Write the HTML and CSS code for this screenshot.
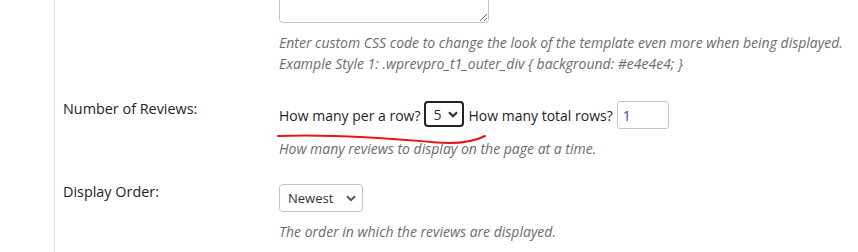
FILE: index.html
```html
<!DOCTYPE html>
<html lang="en">
<head>
    <meta charset="UTF-8">
    <meta name="viewport" content="width=device-width, initial-scale=1.0">
    <title>Template Settings</title>
    <link rel="stylesheet" href="styles.css">
</head>
<body>
    <div class="settings">
        <!-- Custom CSS -->
        <div class="row row-css">
            <div class="label"></div>
            <div class="field">
                <textarea class="css-box"></textarea>
                <p class="description">Enter custom CSS code to change the look of the template even more when being displayed.<br>Example Style 1: .wprevpro_t1_outer_div { background: #e4e4e4; }</p>
            </div>
        </div>

        <!-- Number of Reviews -->
        <div class="row row-count">
            <div class="label">Number of Reviews:</div>
            <div class="field">
                <div class="inline-controls">
                    <span>How many per a row?</span>
                    <span class="select-wrap focused">
                        <select class="small-select">
                            <option>1</option>
                            <option>2</option>
                            <option>3</option>
                            <option>4</option>
                            <option selected>5</option>
                        </select>
                        <svg class="chevron" width="10" height="7" viewBox="0 0 10 7"><path d="M1 1.2 L5 5.2 L9 1.2" fill="none" stroke="#2c3338" stroke-width="2.2"/></svg>
                    </span>
                    <span>How many total rows?</span>
                    <input class="rows-input" type="text" value="1">
                </div>
                <svg class="scribble" width="220" height="18" viewBox="0 0 220 18">
                    <path d="M1 7 C 50 5, 110 9, 160 13.5 C 180 15, 196 13, 208 7" fill="none" stroke="#e8141a" stroke-width="2" stroke-linecap="round"/>
                </svg>
                <p class="description">How many reviews to display on the page at a time.</p>
            </div>
        </div>

        <!-- Display Order -->
        <div class="row row-order">
            <div class="label">Display Order:</div>
            <div class="field">
                <span class="select-wrap">
                    <select class="order-select">
                        <option selected>Newest</option>
                        <option>Oldest</option>
                        <option>Random</option>
                    </select>
                    <svg class="chevron" width="10" height="7" viewBox="0 0 10 7"><path d="M1 1.2 L5 5.2 L9 1.2" fill="none" stroke="#50575e" stroke-width="2"/></svg>
                </span>
                <p class="description">The order in which the reviews are displayed.</p>
            </div>
        </div>
    </div>
</body>
</html>
```

FILE: styles.css
```css
body {
    margin: 0;
    background: #ffffff;
    font-family: 'Open Sans', sans-serif;
    color: #1d2327;
    overflow: hidden;
}

.settings {
    margin-left: 54px;
    border-left: 1px solid #e4e4e4;
    padding-left: 8px;
    min-height: 252px;
}

.row {
    display: grid;
    grid-template-columns: 216px auto;
}

.label {
    font-size: 14.4px;
    line-height: 15px;
}

.description {
    margin: 0;
    font-size: 14px;
    line-height: 21px;
    font-style: italic;
    color: #686d73;
}

/* custom css row */
.row-css .field {
    margin-top: -40px;
}

.css-box {
    display: block;
    box-sizing: border-box;
    width: 210px;
    height: 63px;
    margin: 0 0 9px;
    border: 1px solid #c3c4c7;
    border-radius: 4px;
    resize: both;
}

/* number of reviews row */
.row-count {
    padding-top: 27px;
}

.inline-controls {
    display: flex;
    align-items: center;
    gap: 4px;
    font-size: 14px;
    height: 28px;
}

.select-wrap {
    position: relative;
    display: inline-block;
}

.select-wrap .chevron {
    position: absolute;
    right: 6px;
    top: 50%;
    margin-top: -3px;
    pointer-events: none;
}

.inline-controls .select-wrap {
    align-self: flex-start;
}

select {
    appearance: none;
    -webkit-appearance: none;
    display: block;
    font-family: 'Open Sans', sans-serif;
    background: #ffffff;
    color: #2c3338;
    outline: none;
}

.small-select {
    box-sizing: border-box;
    width: 40px;
    height: 26px;
    padding: 0 0 0 7px;
    font-size: 14px;
    border: 2px solid #1d2327;
    border-radius: 4px;
}

.rows-input {
    box-sizing: border-box;
    width: 52px;
    height: 28px;
    padding: 0 5px;
    font-family: 'Open Sans', sans-serif;
    font-size: 14px;
    color: #50379a;
    border: 1px solid #c3c4c7;
    border-radius: 3px;
    outline: none;
}

.scribble {
    display: block;
    margin: 0 0 -9px -2px;
}

/* display order row */
.row-order {
    padding-top: 25px;
}

.order-select {
    box-sizing: border-box;
    width: 84px;
    height: 28px;
    padding: 0 0 0 8px;
    font-size: 13px;
    border: 1px solid #c3c4c7;
    border-radius: 4px;
}

.row-order .select-wrap {
    display: block;
    width: fit-content;
    margin-bottom: 9px;
}

.row-order .select-wrap .chevron {
    right: 7px;
}
```
